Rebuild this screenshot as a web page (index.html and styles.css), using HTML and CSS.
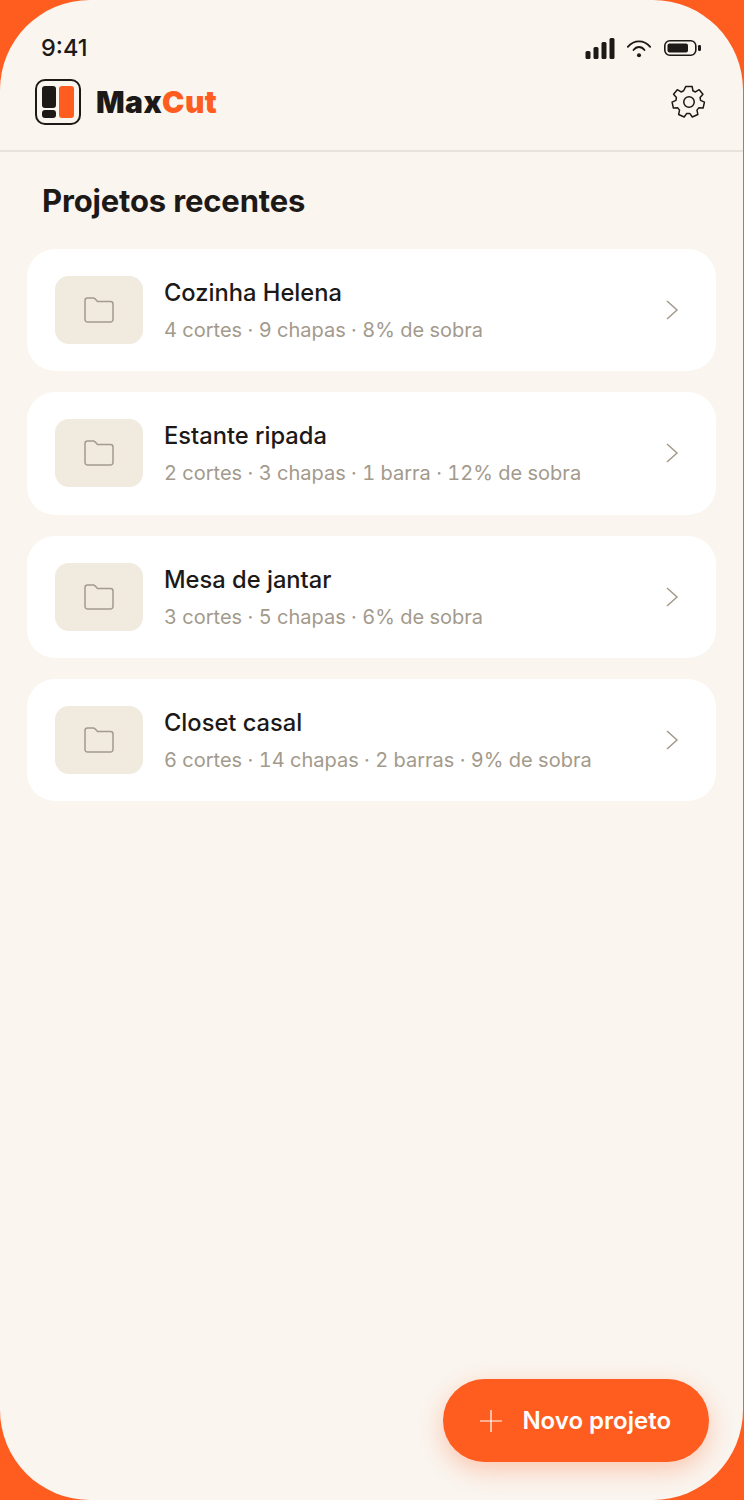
FILE: index.html
```html
<!DOCTYPE html>
<html lang="pt-BR">
<head>
    <meta charset="UTF-8">
    <meta name="viewport" content="width=device-width, initial-scale=1.0">
    <title>MaxCut</title>
    <link rel="stylesheet" href="styles.css">
</head>
<body>
    <div class="screen">
        <div class="status-bar">
            <span class="time">9:41</span>
            <div class="status-icons">
                <svg width="30" height="24" viewBox="0 0 30 24" fill="#1c1917">
                    <rect x="0.500" y="15" width="5" height="8" rx="1.500" />
                    <rect x="8.500" y="11" width="5" height="12" rx="1.500" />
                    <rect x="16.500" y="6" width="5" height="17" rx="1.500" />
                    <rect x="24.500" y="2" width="5" height="21" rx="1.500" />
                </svg>
                <svg width="26" height="24" viewBox="0 0 26 24" fill="none" stroke="#1c1917" stroke-width="1.800" stroke-linecap="round">
                    <path d="M1.800 10.800C8 3.500 18 3.500 24.200 10.800" />
                    <path d="M7.500 14C10.500 10 15.500 10 18.500 14" />
                    <circle cx="13" cy="19.200" r="2" fill="#1c1917" stroke="none" />
                </svg>
                <svg width="38" height="24" viewBox="0 0 38 24" fill="none">
                    <rect x="1.800" y="4.800" width="31" height="14.400" rx="5" stroke="#1c1917" stroke-width="1.600" />
                    <rect x="4.500" y="7.500" width="20.500" height="9" rx="2" fill="#1c1917" />
                    <rect x="35" y="9" width="3" height="6" rx="1.200" fill="#1c1917" />
                </svg>
            </div>
        </div>

        <header class="app-header">
            <div class="brand">
                <svg class="logo" width="46" height="46" viewBox="0 0 46 46">
                    <rect x="1" y="1" width="44" height="44" rx="9" fill="none" stroke="#1c1917" stroke-width="2" />
                    <rect x="7" y="7" width="14" height="22" rx="3" fill="#1c1917" />
                    <rect x="7" y="31" width="14" height="8" rx="3" fill="#1c1917" />
                    <rect x="24" y="7" width="15" height="32" rx="3" fill="#ff5c1f" />
                </svg>
                <span class="brand-name">Max<span class="brand-accent">Cut</span></span>
            </div>
            <svg class="settings" width="36" height="36" viewBox="0 0 24 24" fill="none" stroke="#1c1917" stroke-width="1" stroke-linejoin="round">
                <path d="M9.900 1.600h4.200l.5 2.900 1.700.8 2.500-1.500 2.500 3-1.900 2.200.3 1.900 2.600 1.200-.9 3.900-2.900-.1-1.200 1.500.6 2.900-3.700 1.700-1.700-2.400h-2l-1.700 2.400-3.700-1.700.6-2.900-1.200-1.500-2.900.1-.9-3.900 2.600-1.200.3-1.900-1.900-2.200 2.500-3 2.500 1.500 1.700-.8z" />
                <circle cx="12" cy="12" r="3.500" />
            </svg>
        </header>

        <main class="content">
            <h1>Projetos recentes</h1>
            <div class="project-list">
                <a class="project-card">
                    <div class="thumb">
                        <svg width="32" height="28" viewBox="0 0 32 28" fill="none" stroke="#a39a8c" stroke-width="1.500"><path d="M2 4.500A2.500 2.500 0 0 1 4.500 2H10c1 0 1.600.4 2.300 1.100L14.500 5.500H27.500A2.500 2.500 0 0 1 30 8V23.500A2.500 2.500 0 0 1 27.500 26H4.500A2.500 2.500 0 0 1 2 23.500Z" /></svg>
                    </div>
                    <div class="project-info">
                        <div class="project-name">Cozinha Helena</div>
                        <div class="project-meta">4 cortes · 9 chapas · 8% de sobra</div>
                    </div>
                    <svg class="chevron" width="14" height="22" viewBox="0 0 14 22" fill="none" stroke="#a39a8c" stroke-width="1.500"><path d="M2 2l10 9-10 9" /></svg>
                </a>
                <a class="project-card">
                    <div class="thumb">
                        <svg width="32" height="28" viewBox="0 0 32 28" fill="none" stroke="#a39a8c" stroke-width="1.500"><path d="M2 4.500A2.500 2.500 0 0 1 4.500 2H10c1 0 1.600.4 2.300 1.100L14.500 5.500H27.500A2.500 2.500 0 0 1 30 8V23.500A2.500 2.500 0 0 1 27.500 26H4.500A2.500 2.500 0 0 1 2 23.500Z" /></svg>
                    </div>
                    <div class="project-info">
                        <div class="project-name">Estante ripada</div>
                        <div class="project-meta">2 cortes · 3 chapas · 1 barra · 12% de sobra</div>
                    </div>
                    <svg class="chevron" width="14" height="22" viewBox="0 0 14 22" fill="none" stroke="#a39a8c" stroke-width="1.500"><path d="M2 2l10 9-10 9" /></svg>
                </a>
                <a class="project-card">
                    <div class="thumb">
                        <svg width="32" height="28" viewBox="0 0 32 28" fill="none" stroke="#a39a8c" stroke-width="1.500"><path d="M2 4.500A2.500 2.500 0 0 1 4.500 2H10c1 0 1.600.4 2.300 1.100L14.500 5.500H27.500A2.500 2.500 0 0 1 30 8V23.500A2.500 2.500 0 0 1 27.500 26H4.500A2.500 2.500 0 0 1 2 23.500Z" /></svg>
                    </div>
                    <div class="project-info">
                        <div class="project-name">Mesa de jantar</div>
                        <div class="project-meta">3 cortes · 5 chapas · 6% de sobra</div>
                    </div>
                    <svg class="chevron" width="14" height="22" viewBox="0 0 14 22" fill="none" stroke="#a39a8c" stroke-width="1.500"><path d="M2 2l10 9-10 9" /></svg>
                </a>
                <a class="project-card">
                    <div class="thumb">
                        <svg width="32" height="28" viewBox="0 0 32 28" fill="none" stroke="#a39a8c" stroke-width="1.500"><path d="M2 4.500A2.500 2.500 0 0 1 4.500 2H10c1 0 1.600.4 2.300 1.100L14.500 5.500H27.500A2.500 2.500 0 0 1 30 8V23.500A2.500 2.500 0 0 1 27.500 26H4.500A2.500 2.500 0 0 1 2 23.500Z" /></svg>
                    </div>
                    <div class="project-info">
                        <div class="project-name">Closet casal</div>
                        <div class="project-meta">6 cortes · 14 chapas · 2 barras · 9% de sobra</div>
                    </div>
                    <svg class="chevron" width="14" height="22" viewBox="0 0 14 22" fill="none" stroke="#a39a8c" stroke-width="1.500"><path d="M2 2l10 9-10 9" /></svg>
                </a>
            </div>
        </main>

        <button class="new-project">
            <svg width="24" height="24" viewBox="0 0 24 24" fill="none" stroke="#fff" stroke-width="1.200"><path d="M12 1v22M1 12h22" /></svg>
            Novo projeto
        </button>
    </div>
</body>
</html>
```

FILE: styles.css
```css
html, body {
    margin: 0;
    height: 100%;
    background-color: #ff5c1f;
}

.screen {
    position: relative;
    box-sizing: border-box;
    width: 743px;
    height: 1500px;
    overflow: hidden;
    background-color: #faf5ef;
    border-radius: 90px;
    font-family: "Inter", sans-serif;
    color: #1c1917;
}

.status-bar {
    display: flex;
    justify-content: space-between;
    align-items: center;
    height: 34px;
    padding: 31px 41px 0 41px;
}

.time {
    font-size: 23.5px;
    font-weight: 500;
    line-height: 34px;
}

.status-icons {
    display: flex;
    align-items: center;
    gap: 11px;
    margin-right: 1px;
}

.app-header {
    display: flex;
    justify-content: space-between;
    align-items: center;
    height: 74px;
    padding: 0 36px 11px 35px;
    border-bottom: 2px solid #e8e3da;
}

.brand {
    display: flex;
    align-items: center;
    gap: 15px;
}

.brand-name {
    font-size: 30px;
    font-weight: 900;
    letter-spacing: 0.4px;
}

.brand-accent {
    color: #ff5c1f;
}

.content {
    padding: 29px 27px 0 27px;
}

h1 {
    margin: 0 0 28px 15px;
    font-size: 31px;
    font-weight: 700;
    line-height: 40px;
    letter-spacing: -0.15px;
}

.project-list {
    display: flex;
    flex-direction: column;
    gap: 21px;
}

.project-card {
    display: flex;
    align-items: center;
    height: 122.33px;
    padding: 0 37px 0 28px;
    background-color: #fff;
    border-radius: 28px;
}

.thumb {
    display: flex;
    justify-content: center;
    align-items: center;
    width: 88px;
    height: 68px;
    margin-right: 21px;
    background-color: #f0eadf;
    border-radius: 14px;
}

.project-info {
    flex: 1;
}

.project-name {
    font-size: 23.7px;
    font-weight: 500;
    line-height: 32px;
    margin-bottom: 8px;
}

.project-meta {
    font-size: 20px;
    line-height: 26px;
    color: #a39a8c;
    font-variant-numeric: tabular-nums;
}

.new-project {
    position: absolute;
    right: 34px;
    bottom: 38px;
    display: flex;
    align-items: center;
    gap: 19px;
    height: 83px;
    padding: 0 38px 0 36px;
    border: none;
    border-radius: 42px;
    background-color: #ff5c1f;
    color: #fff;
    font-family: "Inter", sans-serif;
    font-size: 24px;
    font-weight: 600;
    box-shadow: 0 8px 24px rgba(255, 92, 31, 0.3);
}
```
